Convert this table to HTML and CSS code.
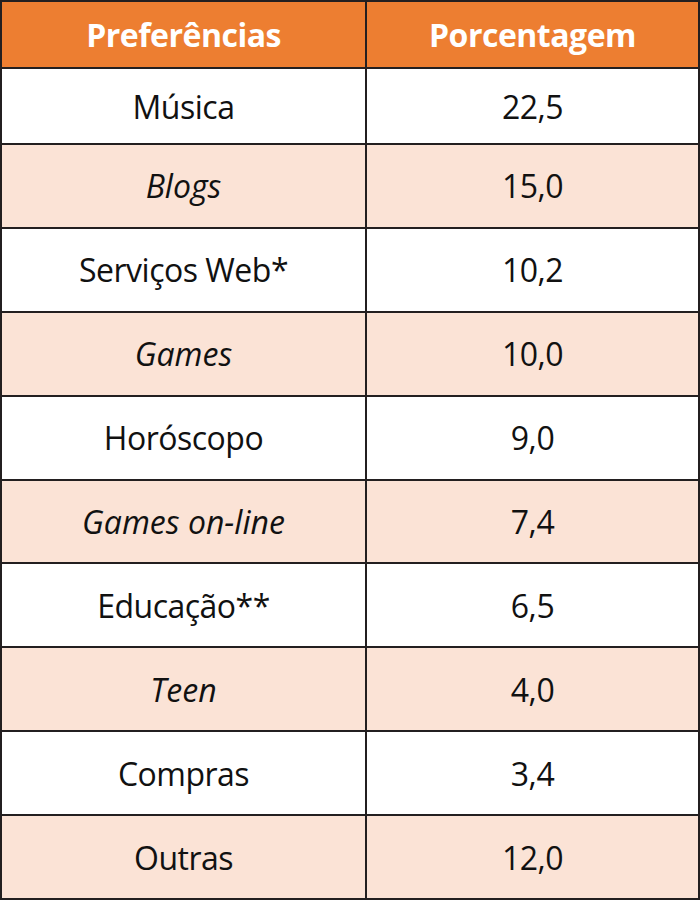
FILE: index.html
```html
<!DOCTYPE html>
<html lang="pt">
<head>
<meta charset="utf-8">
<title>Preferências</title>
<link rel="stylesheet" href="styles.css">
</head>
<body>
<div class="table" role="table">
  <div class="cell head" role="columnheader">Preferências</div>
  <div class="cell head" role="columnheader">Porcentagem</div>

  <div class="cell" role="cell">Música</div>
  <div class="cell" role="cell">22,5</div>

  <div class="cell alt" role="cell"><em>Blogs</em></div>
  <div class="cell alt" role="cell">15,0</div>

  <div class="cell" role="cell">Serviços Web*</div>
  <div class="cell" role="cell">10,2</div>

  <div class="cell alt" role="cell"><em>Games</em></div>
  <div class="cell alt" role="cell">10,0</div>

  <div class="cell" role="cell">Horóscopo</div>
  <div class="cell" role="cell">9,0</div>

  <div class="cell alt" role="cell"><em>Games on-line</em></div>
  <div class="cell alt" role="cell">7,4</div>

  <div class="cell" role="cell">Educação**</div>
  <div class="cell" role="cell">6,5</div>

  <div class="cell alt" role="cell"><em>Teen</em></div>
  <div class="cell alt" role="cell">4,0</div>

  <div class="cell" role="cell">Compras</div>
  <div class="cell" role="cell">3,4</div>

  <div class="cell alt" role="cell">Outras</div>
  <div class="cell alt" role="cell">12,0</div>
</div>
</body>
</html>
```
FILE: styles.css
```css
html, body {
  margin: 0;
  padding: 0;
  background: #ffffff;
}

.table {
  box-sizing: border-box;
  width: 700px;
  height: 900px;
  display: grid;
  grid-template-columns: 363px 1fr;
  grid-template-rows: 65px 74px repeat(9, 1fr);
  gap: 2px;
  padding: 2px;
  background: #231f20;
  font-family: "Open Sans", "Noto Sans", sans-serif;
}

.cell {
  display: flex;
  align-items: center;
  justify-content: center;
  background: #ffffff;
  color: #111111;
  font-size: 32px;
  letter-spacing: -0.5px;
}

.cell em {
  font-style: italic;
  letter-spacing: 0;
}

.alt {
  background: #fbe3d6;
}

.head {
  background: #ed7e31;
  color: #ffffff;
  font-weight: 700;
  font-size: 32px;
  letter-spacing: -0.5px;
}
```
